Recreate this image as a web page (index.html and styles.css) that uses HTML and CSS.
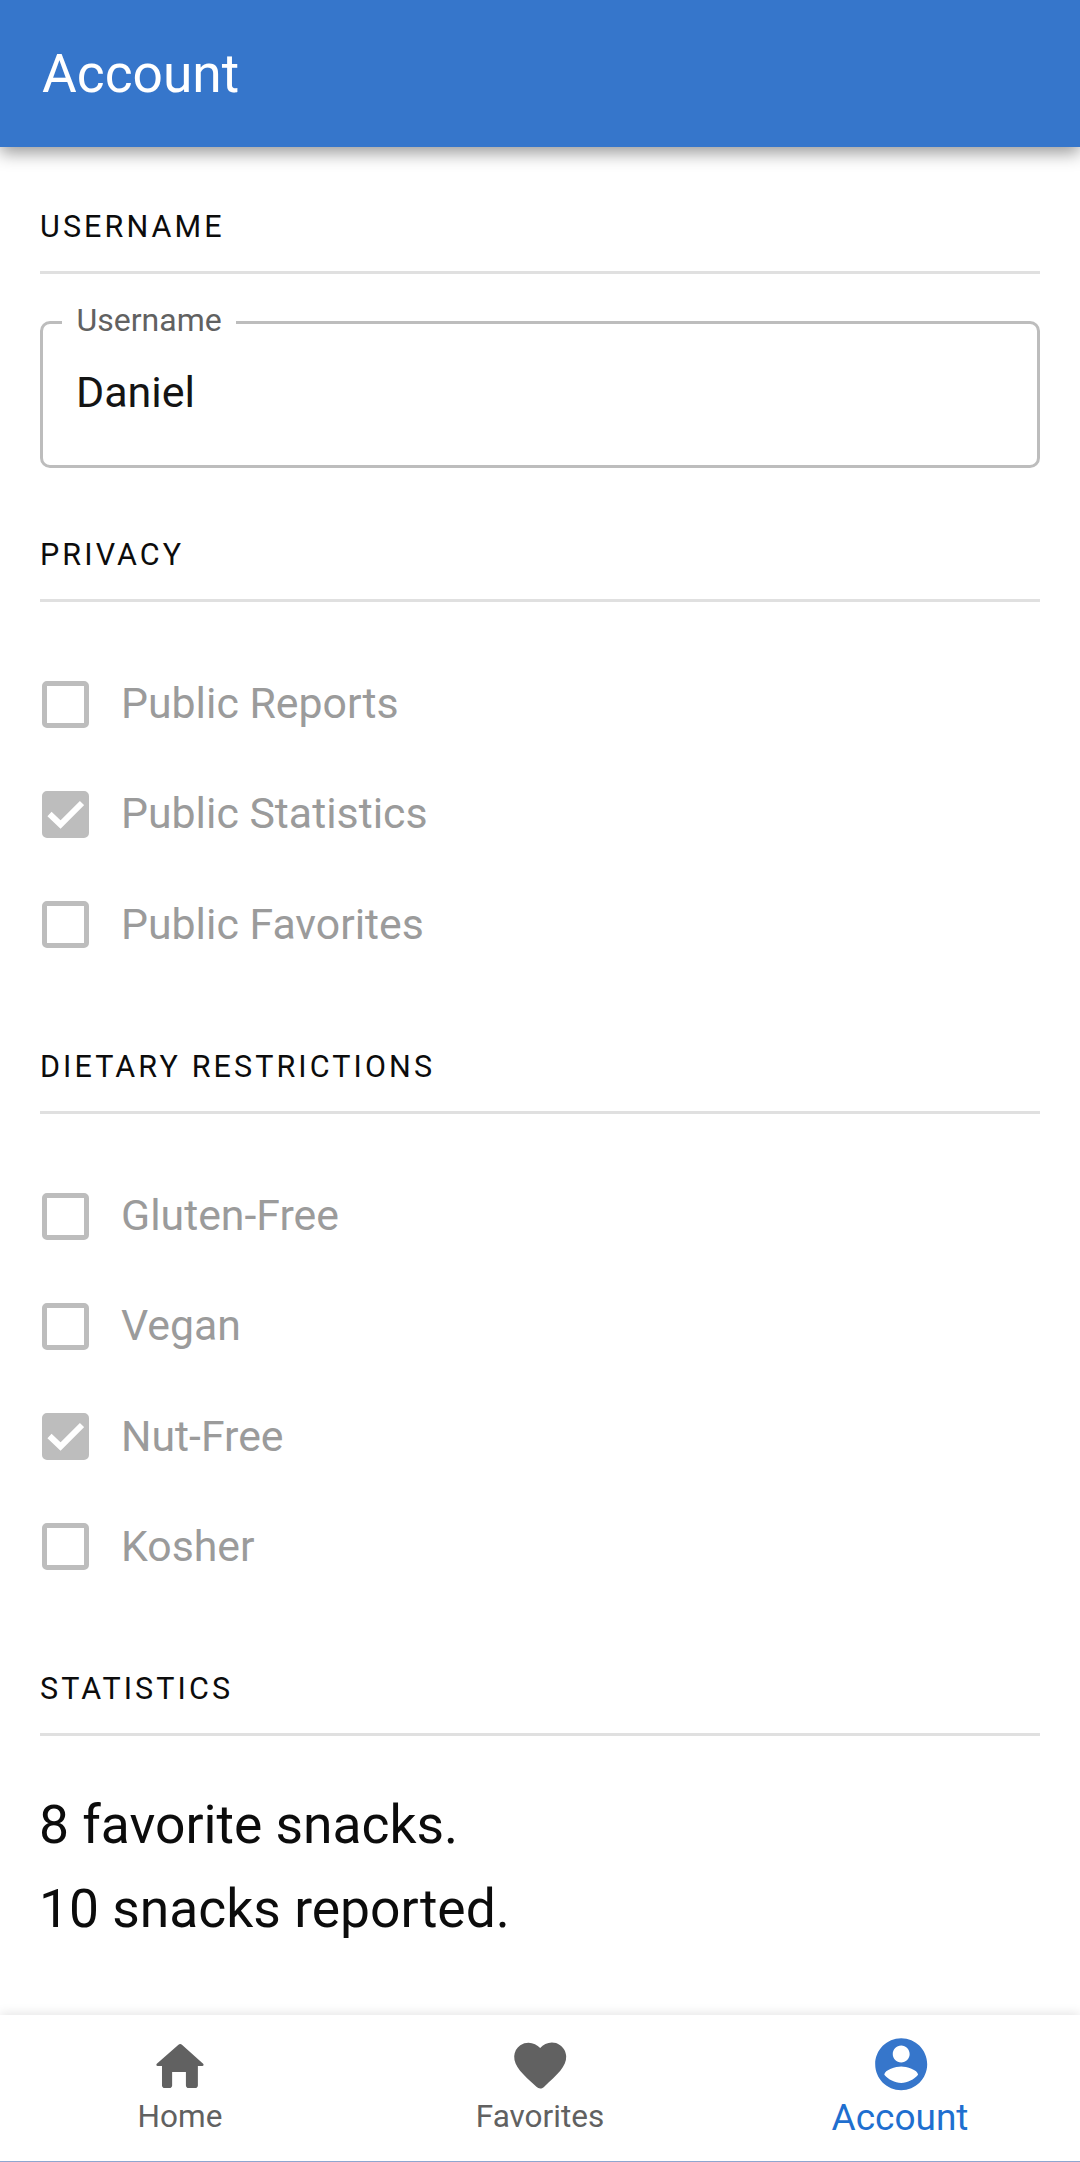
FILE: index.html
```html
<!DOCTYPE html>
<html lang="en">
<head>
<meta charset="utf-8">
<title>Account</title>
<link rel="stylesheet" href="styles.css">
</head>
<body>
<div class="screen">
  <header class="appbar"><h1 class="appbar-title">Account</h1></header>
  <main class="content">
    <section class="section section-username">
      <h2 class="section-title">USERNAME</h2>
      <div class="field">
        <span class="field-legend">Username</span>
        <div class="field-value">Daniel</div>
      </div>
    </section>
    <section class="section">
      <h2 class="section-title">PRIVACY</h2>
      <ul class="checks">
        <li class="check"><span class="box"></span><span class="check-label">Public Reports</span></li>
        <li class="check"><span class="box box-on"><svg viewBox="0 0 37 37" class="tick"><path d="M2.5 18L13.5 28.5 35 7"/></svg></span><span class="check-label">Public Statistics</span></li>
        <li class="check"><span class="box"></span><span class="check-label">Public Favorites</span></li>
      </ul>
    </section>
    <section class="section">
      <h2 class="section-title">DIETARY RESTRICTIONS</h2>
      <ul class="checks">
        <li class="check"><span class="box"></span><span class="check-label">Gluten-Free</span></li>
        <li class="check"><span class="box"></span><span class="check-label">Vegan</span></li>
        <li class="check"><span class="box box-on"><svg viewBox="0 0 37 37" class="tick"><path d="M2.5 18L13.5 28.5 35 7"/></svg></span><span class="check-label">Nut-Free</span></li>
        <li class="check"><span class="box"></span><span class="check-label">Kosher</span></li>
      </ul>
    </section>
    <section class="section section-stats">
      <h2 class="section-title">STATISTICS</h2>
      <p class="stat">8 favorite snacks.</p>
      <p class="stat">10 snacks reported.</p>
    </section>
  </main>
  <nav class="tabbar">
    <div class="tab">
      <svg class="tab-icon" viewBox="0 0 24 24"><path d="M8.9 20.2V15h5.3v5.2c0 .55.45 1 1 1h2.6c.55 0 1-.45 1-1v-7.5h1.7c.46 0 .68-.57.33-.87L12.67 4.5c-.38-.34-.96-.34-1.34 0L3 11.83c-.34.3-.13.87.33.87H5v7.5c0 .55.45 1 1 1h1.9c.55 0 1-.45 1-1z"/></svg>
      <span class="tab-label">Home</span>
    </div>
    <div class="tab">
      <svg class="tab-icon" viewBox="0 -0.7 24 24"><path d="M13.35 20.13c-.76.69-1.93.69-2.69-.01l-.11-.1C5.3 15.27 1.87 12.16 2 8.28c.06-1.7.93-3.33 2.34-4.29 2.64-1.8 5.9-.96 7.66 1.1 1.76-2.06 5.02-2.91 7.66-1.1 1.41.96 2.28 2.59 2.34 4.29.14 3.88-3.3 6.99-8.55 11.76l-.1.09z"/></svg>
      <span class="tab-label">Favorites</span>
    </div>
    <div class="tab tab-active">
      <svg class="tab-icon" viewBox="0 0 24 24"><path d="M12 2C6.48 2 2 6.48 2 12s4.48 10 10 10 10-4.48 10-10S17.52 2 12 2zm0 2.85c1.8 0 3.25 1.45 3.25 3.25S13.8 11.35 12 11.35 8.75 9.9 8.75 8.1 10.2 4.85 12 4.85zm0 14.35c-2.5 0-4.9-1.28-6.5-3.1.1-2 4.5-3.2 6.5-3.2s6.4 1.2 6.5 3.2c-1.6 1.82-4 3.1-6.5 3.1z"/></svg>
      <span class="tab-label">Account</span>
    </div>
  </nav>
</div>
</body>
</html>
```
FILE: styles.css
```css
* { box-sizing: border-box; }
html, body { margin: 0; padding: 0; background: #fff; }
body { font-family: Roboto, "Liberation Sans", sans-serif; }
.screen { width: 1080px; height: 2162px; display: flex; flex-direction: column; overflow: hidden; }
.appbar { height: 147px; background: #3676cb; flex: none; display: flex; align-items: center; padding-left: 42px; padding-top: 3px; box-shadow: 0 6px 16px rgba(0,0,0,.4); position: relative; z-index: 1; }
.appbar-title { margin: 0; color: #fff; font-size: 53.3px; font-weight: 400; line-height: 1; }
.content { flex: 1; padding: 0 40px; }
.section { padding-top: 69px; }
.section-username { padding-top: 62px; }
.section-title { margin: 0; height: 65px; border-bottom: 3px solid #e0e0e0; font-size: 30.5px; font-weight: 400; letter-spacing: 3.1px; color: #0c0c0c; line-height: 35px; }
.field { position: relative; margin-top: 47px; padding: 43px 0 0 33px; height: 147px; border: 3px solid #bdbdbd; border-radius: 10px; }
.field-legend { position: absolute; left: 19px; top: -17px; padding: 0 14.5px; background: #fff; font-size: 32px; line-height: 26px; color: #616161; }
.field-value { font-size: 43px; line-height: 50px; color: #141414; }
.checks { list-style: none; margin: 0; padding: 47px 0 0; }
.check { height: 110.3px; display: flex; align-items: center; }
.box { width: 47px; height: 47px; margin-left: 2px; border: 5px solid #bdbdbd; border-radius: 5px; flex: none; display: block; }
.box-on { background: #bdbdbd; }
.tick { display: block; width: 37px; height: 37px; fill: none; stroke: #fff; stroke-width: 6; }
.check-label { margin-left: 32px; padding-bottom: 2px; font-size: 42.8px; color: #9b9b9b; }
.stat { margin: 0 0 0 -1px; font-size: 53.4px; line-height: 84px; color: #0c0c0c; }
.section-stats .section-title + .stat { margin-top: 47px; }
.tabbar { height: 147px; flex: none; display: grid; grid-template-columns: repeat(3, 1fr); box-shadow: 0 -2px 10px rgba(0,0,0,.1); border-bottom: 1px solid #8fa6cf; background: #fff; }
.tab { display: flex; flex-direction: column; align-items: center; color: #616161; padding-top: 18px; }
.tab-icon { width: 62.4px; height: 62.4px; fill: currentColor; display: block; flex: none; }
.tab-label { font-size: 31.5px; line-height: 36px; margin-top: 4px; }
.tab-active { color: #1f6fcf; }
.tab-active .tab-icon { fill: #3676cb; margin-left: 2px; }
.tab-active .tab-label { font-size: 37px; line-height: 40px; margin-top: 2.5px; }
```
